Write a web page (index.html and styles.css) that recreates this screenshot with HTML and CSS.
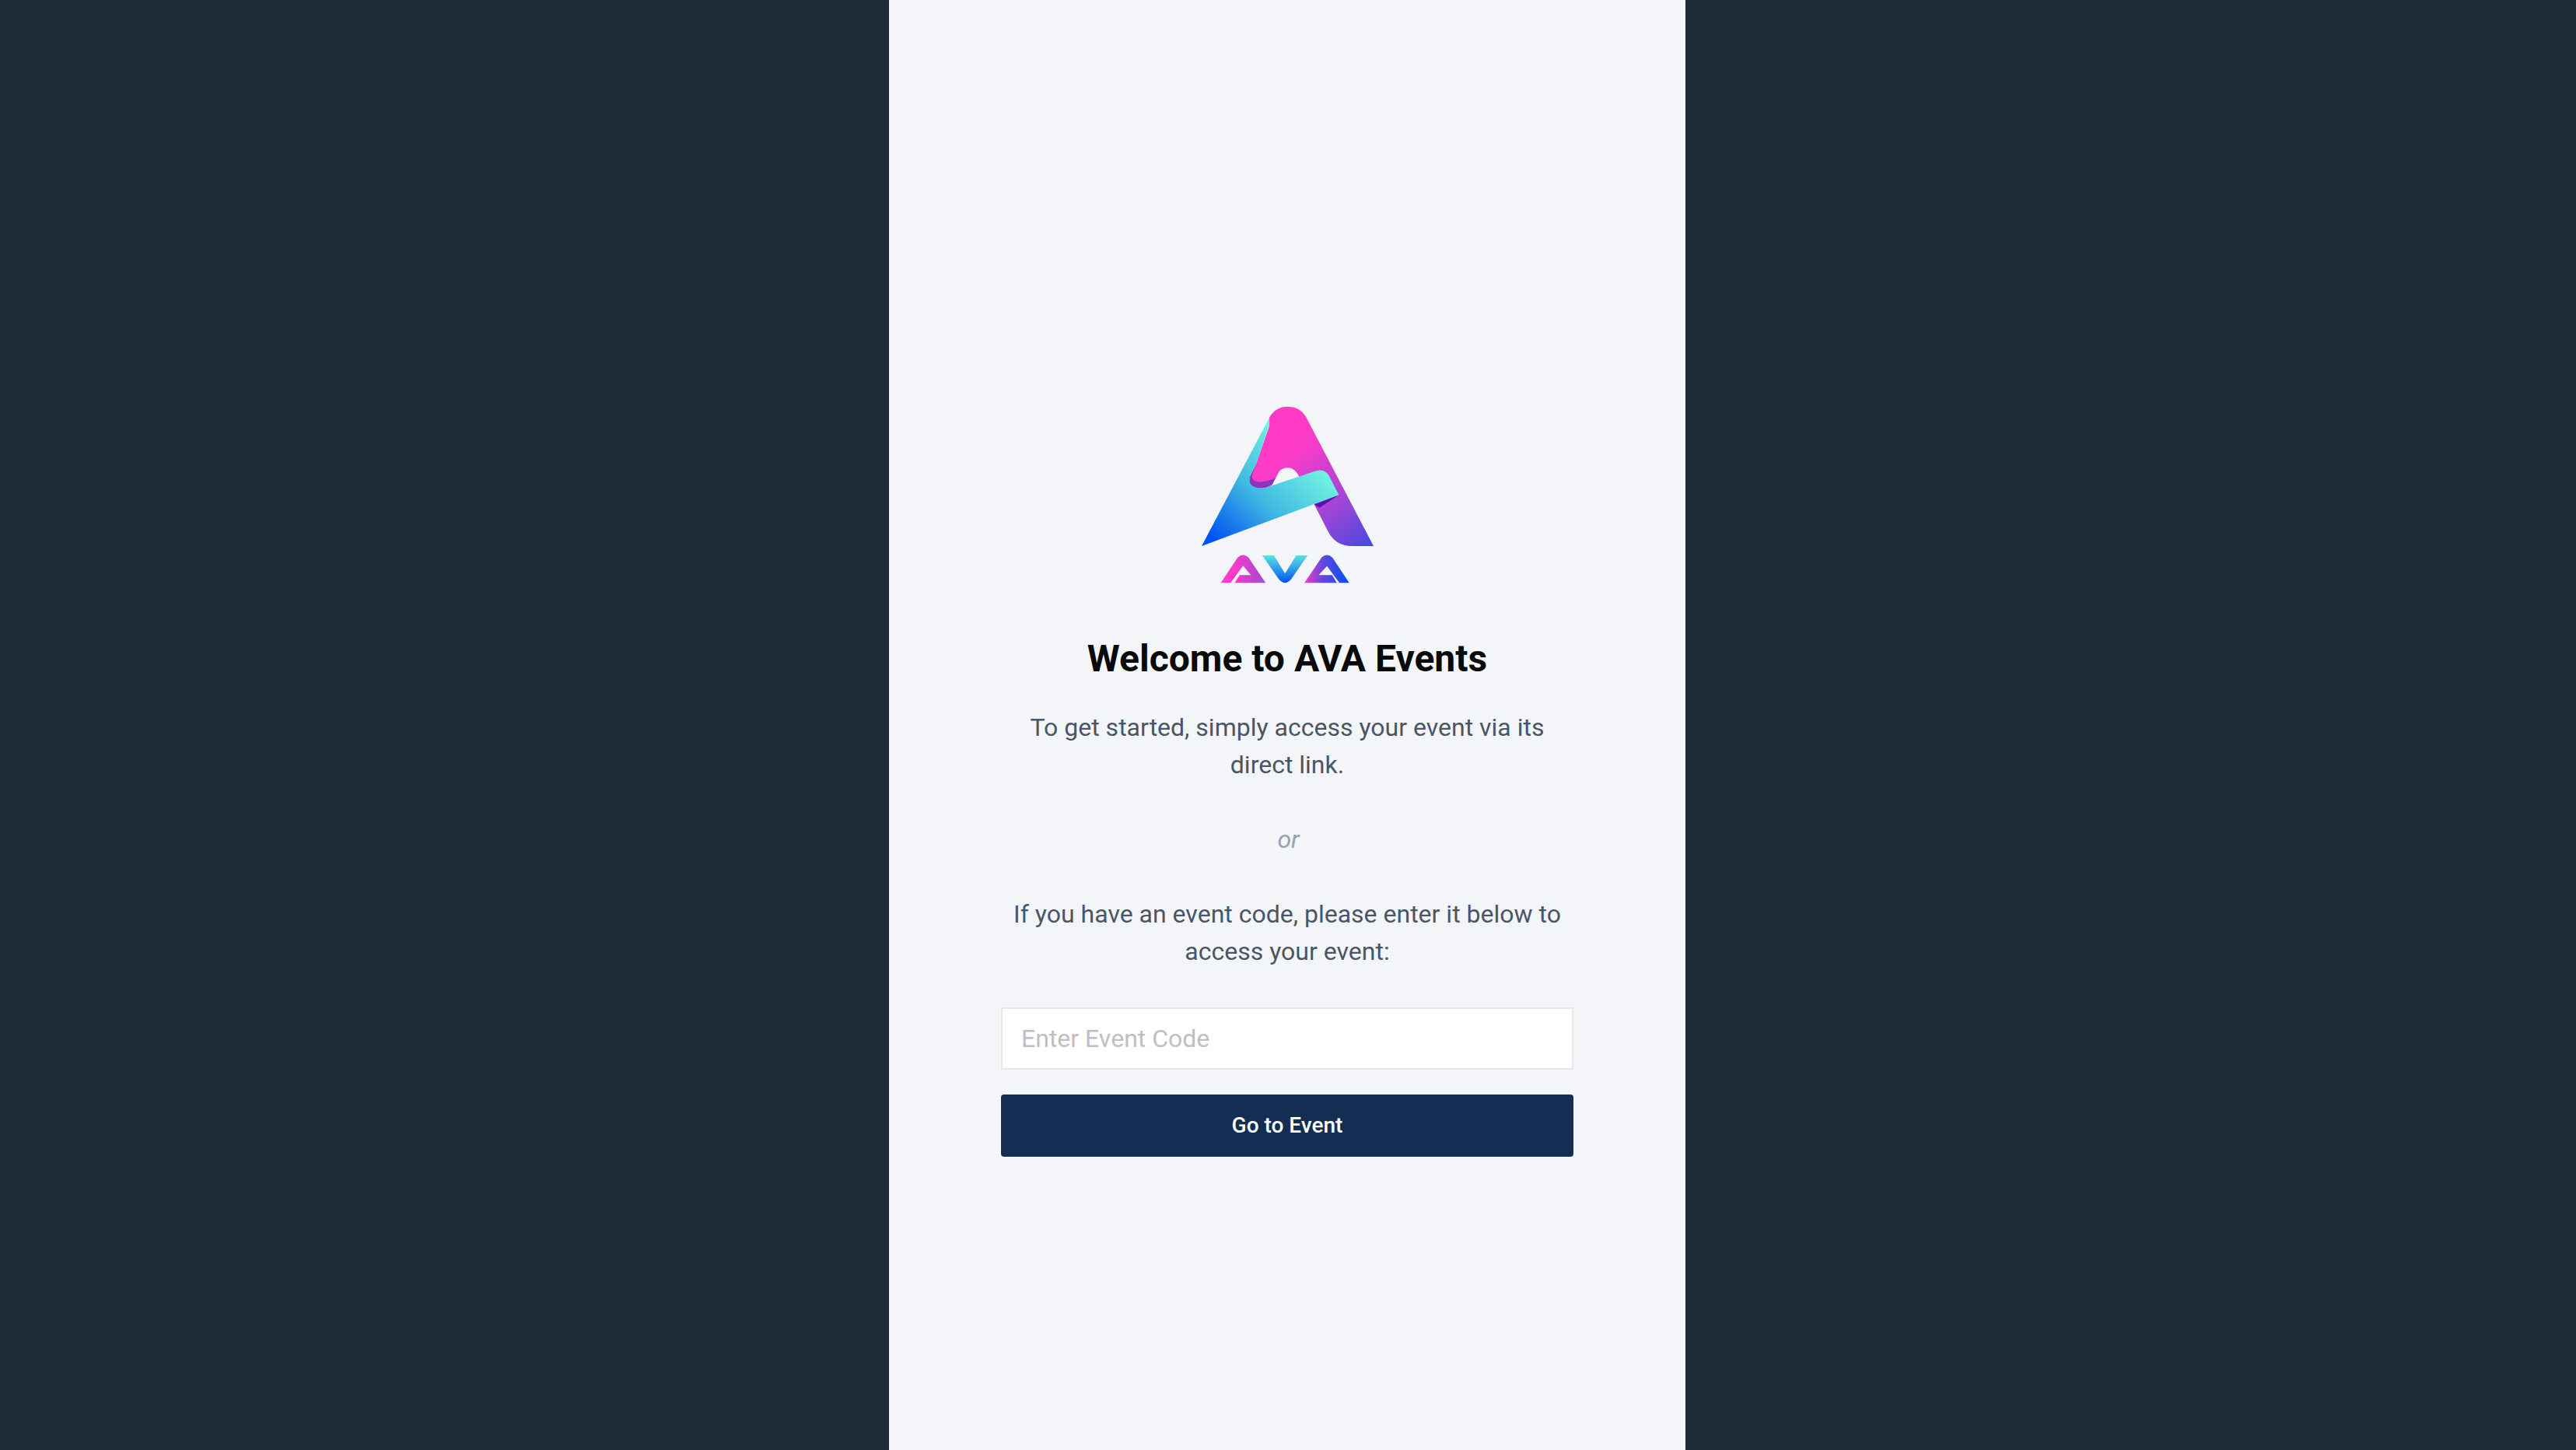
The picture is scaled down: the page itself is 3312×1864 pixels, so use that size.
FILE: index.html
```html
<!DOCTYPE html>
<html lang="en">
<head>
<meta charset="utf-8">
<title>AVA Events</title>
<link rel="stylesheet" href="styles.css">
</head>
<body>
<main class="panel">
  <svg class="logo" viewBox="133 65 664 685" aria-label="AVA logo" role="img">
    <defs>
      <linearGradient id="gTeal" gradientUnits="userSpaceOnUse" x1="200" y1="600" x2="520" y2="250">
        <stop offset="0" stop-color="#0052f0"/>
        <stop offset=".5" stop-color="#3fb8e2"/>
        <stop offset="1" stop-color="#6ef2e0"/>
      </linearGradient>
      <linearGradient id="gPink" gradientUnits="userSpaceOnUse" x1="430" y1="190" x2="770" y2="620">
        <stop offset="0" stop-color="#ff3bc6"/>
        <stop offset=".15" stop-color="#fb3cc8"/>
        <stop offset=".65" stop-color="#9a46d8"/>
        <stop offset="1" stop-color="#4648e0"/>
      </linearGradient>
      <linearGradient id="gA1" gradientUnits="userSpaceOnUse" x1="207" y1="0" x2="380" y2="0">
        <stop offset=".25" stop-color="#ff3bc8"/>
        <stop offset="1" stop-color="#a04ad2"/>
      </linearGradient>
      <linearGradient id="gV" gradientUnits="userSpaceOnUse" x1="0" y1="642" x2="0" y2="750">
        <stop offset="0" stop-color="#5fe0e4"/>
        <stop offset="1" stop-color="#0052f0"/>
      </linearGradient>
      <linearGradient id="gA3" gradientUnits="userSpaceOnUse" x1="530" y1="0" x2="703" y2="0">
        <stop offset="0" stop-color="#f03cc8"/>
        <stop offset=".45" stop-color="#5a48e0"/>
        <stop offset="1" stop-color="#0052f0"/>
      </linearGradient>
    </defs>
    <path fill="#8a35bc" d="M345 285L318 340C312 365 325 383 355 383C375 383 390 378 405 370L428 325L400 330Z"/>
    <path fill="url(#gPink)" d="M393 112C410 80 435 67 465 67C495 67 520 80 535 105L797 606L715 606C670 606 640 585 622 550L560 430L508 335C498 312 480 303 465 303C448 303 435 312 428 325L418 342C390 355 355 362 340 355C325 348 326 335 332 320L390 155C396 135 396 125 393 112Z"/>
    <path fill="#5a10b4" d="M568 445L663 408L588 458Z"/>
    <path fill="url(#gTeal)" d="M133 606L393 113C397 130 392 145 385 165L345 285L320 335C312 365 325 378 355 382C372 383 388 379 400 374L575 315C600 309 615 318 625 335L663 408Z"/>
    <path fill="url(#gA1)" d="M207 748L272 650Q293 630 314 650L380 748L260 748L280 718L323 718L293 682L245 748Z"/>
    <path fill="url(#gV)" d="M367 642L412 642L455 712L498 642L542 642L478 735Q455 760 432 735Z"/>
    <path fill="url(#gA3)" d="M530 748L596 650Q617 630 638 650L703 748L665 748L617 683L585 718L637 718L655 748Z"/>
  </svg>
  <h1 class="title">Welcome to AVA Events</h1>
  <p class="copy">To get started, simply access your event via its direct link.</p>
  <p class="or">or</p>
  <p class="copy">If you have an event code, please enter it below to access your event:</p>
  <form class="form">
    <input class="code" type="text" placeholder="Enter Event Code">
    <button class="go" type="button">Go to Event</button>
  </form>
</main>
</body>
</html>
```
FILE: styles.css
```css
* { box-sizing: border-box; }
html, body { height: 100%; }
body {
  margin: 0;
  padding-right: 2px;
  background: #1e2a38;
  display: flex;
  justify-content: center;
  font-family: Roboto, "Liberation Sans", sans-serif;
}
.panel {
  width: 1024px;
  height: 1864px;
  background: #f3f5f9;
  padding: 522px 144px 0;
  display: flex;
  flex-direction: column;
  align-items: center;
  text-align: center;
}
.logo {
  width: 221px;
  height: 228px;
  display: block;
  flex: none;
}
.title {
  margin: 65px 0 0;
  font-size: 48px;
  line-height: 64px;
  font-weight: 700;
  color: #0a0a0a;
}
.copy {
  margin: 32px 0 0;
  font-size: 32px;
  line-height: 48px;
  color: #4a5565;
}
.or {
  margin: 48px 0 48px;
  padding-left: 3px;
  font-size: 32px;
  line-height: 48px;
  font-style: italic;
  color: #99a1af;
}
.or + .copy { margin-top: 0; }
.form {
  width: 100%;
  margin-top: 48px;
  display: flex;
  flex-direction: column;
  gap: 32px;
}
.code {
  width: 100%;
  height: 80px;
  padding: 0 24px;
  background: #fff;
  border: 2px solid #e5e7eb;
  border-radius: 0;
  outline: none;
  font: 400 32px Roboto, sans-serif;
  color: #333;
}
.code::placeholder { color: #bfbfbf; opacity: 1; }
.go {
  width: 100%;
  height: 80px;
  padding: 0 0 2px;
  background: #142d53;
  border: 0;
  border-radius: 4px;
  color: #fff;
  font: 500 28px Roboto, sans-serif;
}
```
